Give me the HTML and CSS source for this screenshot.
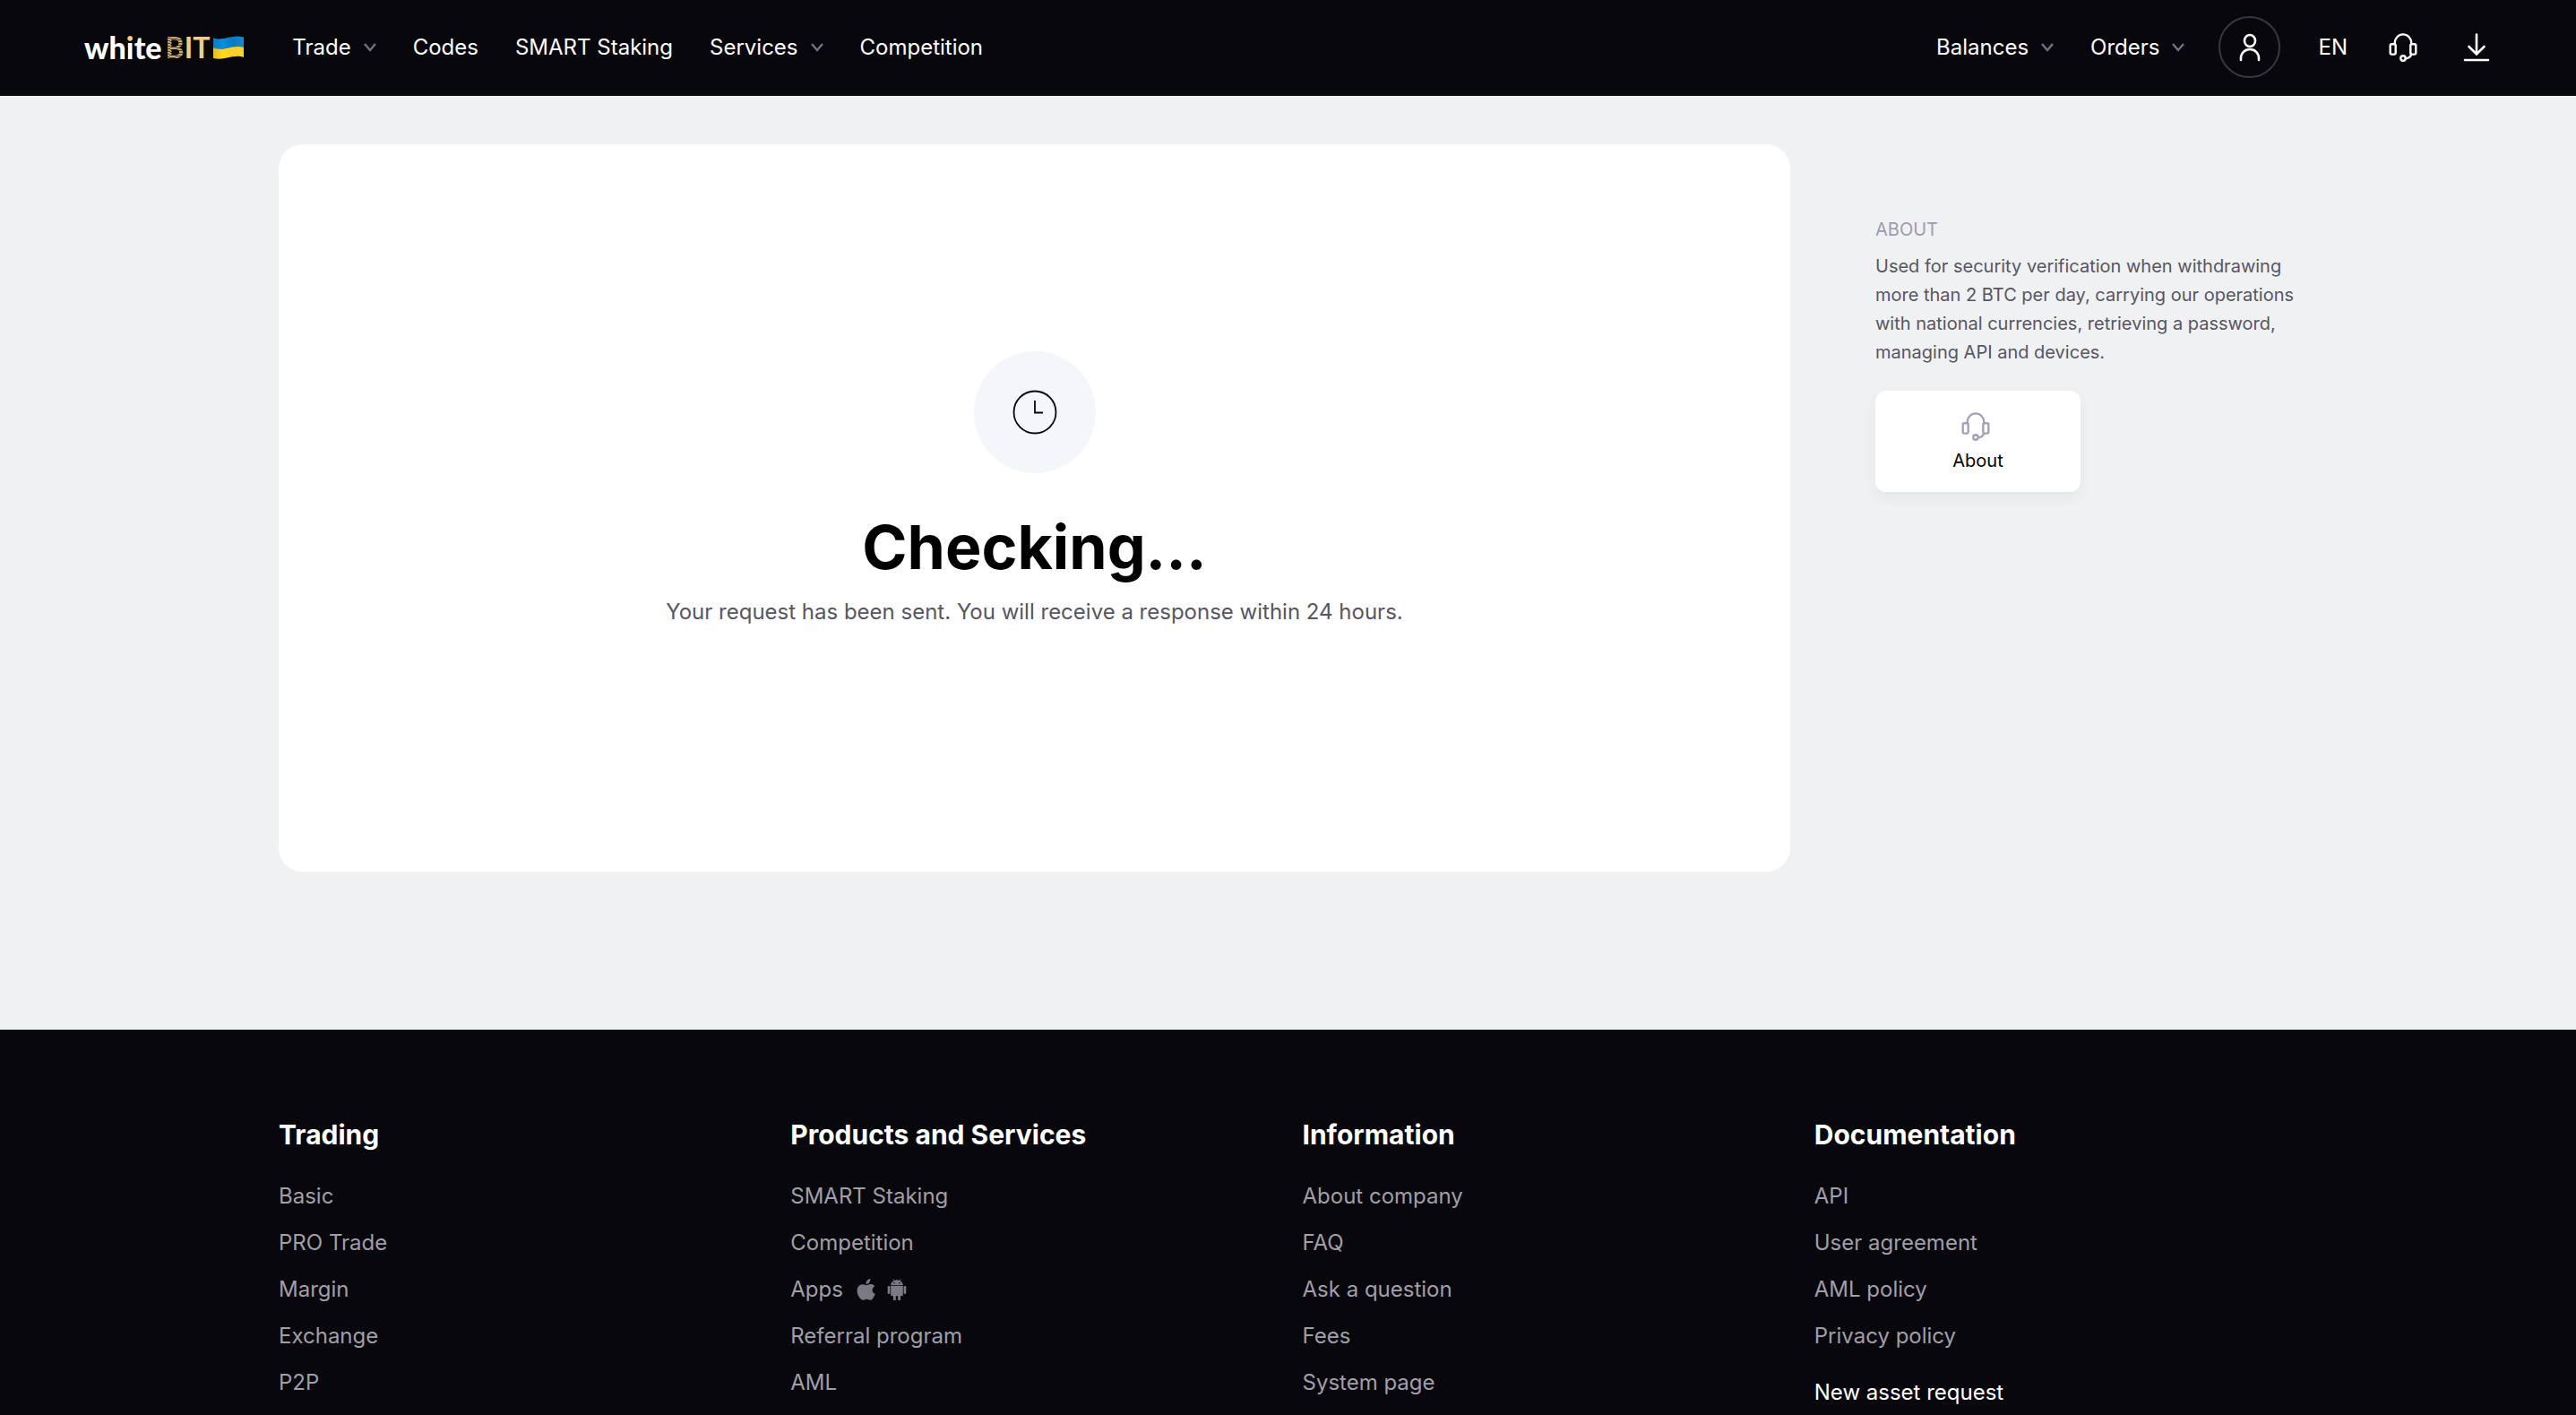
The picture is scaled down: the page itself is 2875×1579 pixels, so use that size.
FILE: index.html
```html
<!DOCTYPE html>
<html lang="en">
<head>
<meta charset="utf-8">
<meta name="viewport" content="width=device-width, initial-scale=1">
<title>Verification – whiteBIT</title>
<link rel="stylesheet" href="styles.css">
</head>
<body>
<svg class="sprite" aria-hidden="true">
  <symbol id="chevron" viewBox="0 0 14 10"><path d="M1 1l6 7 6-7" fill="none" stroke="currentColor" stroke-width="2.4"/></symbol>
  <symbol id="headset" viewBox="0 0 32 32">
    <g fill="none" stroke="currentColor" stroke-width="2.4" stroke-linejoin="round">
      <rect x="1.7" y="12.2" width="6" height="11.4" rx="1.5"/>
      <rect x="24.3" y="12.2" width="6" height="11.4" rx="1.5"/>
      <path d="M6.7 12.2V11a9.3 9.6 0 0 1 18.6 0v1.2"/>
      <path d="M25.3 23.6q-1.3 4.1-6 4.6"/>
      <circle cx="16" cy="28" r="2.7"/>
    </g>
  </symbol>
</svg>
<header class="header">
  <a class="logo" href="#" aria-label="whiteBIT">
    <span class="logo-name">wh<span class="logo-i">i</span>te</span>
    <span class="logo-bit"><span class="logo-b">B</span>IT</span>
    <svg class="flag" viewBox="0 0 34 26" aria-hidden="true">
      <defs>
        <linearGradient id="blue" x1="0" x2="1"><stop offset="0" stop-color="#1379bd"/><stop offset=".3" stop-color="#0590dc"/><stop offset=".65" stop-color="#0879c4"/><stop offset="1" stop-color="#118bd0"/></linearGradient>
        <linearGradient id="yellow" x1="0" x2="1"><stop offset="0" stop-color="#e8b92c"/><stop offset=".3" stop-color="#ffd91e"/><stop offset=".7" stop-color="#f8cf2c"/><stop offset="1" stop-color="#ffd52a"/></linearGradient>
      </defs>
      <path d="M0 2.500C12 6 20-2 34 1.500V14C22 9 14 18 0 14z" fill="url(#blue)"/>
      <path d="M0 13.500C14 18 20 9 34 13V24C22 20 14 28 0 25z" fill="url(#yellow)"/>
    </svg>
  </a>
  <nav class="nav" aria-label="Main">
    <button class="nav-item" type="button">Trade <svg class="chevron"><use href="#chevron"/></svg></button>
    <a class="nav-item" href="#">Codes</a>
    <a class="nav-item" href="#">SMART Staking</a>
    <button class="nav-item" type="button">Services <svg class="chevron"><use href="#chevron"/></svg></button>
    <a class="nav-item" href="#">Competition</a>
  </nav>
  <div class="nav account">
    <button class="nav-item" type="button">Balances <svg class="chevron"><use href="#chevron"/></svg></button>
    <button class="nav-item" type="button">Orders <svg class="chevron"><use href="#chevron"/></svg></button>
  </div>
  <div class="tools">
    <button class="profile" type="button" aria-label="Profile">
      <svg class="icon" viewBox="0 0 32 32"><g fill="none" stroke="currentColor" stroke-width="2.600" stroke-linecap="round"><ellipse cx="16" cy="8.500" rx="6" ry="6.500"/><path d="M6 30v-2a10 10 0 0 1 20 0v2"/></g></svg>
    </button>
    <button class="nav-item" type="button">EN</button>
    <button class="tool" type="button" aria-label="Support"><svg class="icon"><use href="#headset"/></svg></button>
    <button class="tool" type="button" aria-label="Download app">
      <svg class="icon" viewBox="0 0 32 32"><path d="M16 1.500V23M7.500 15l8.500 8.500 8.500-8.500M3 30h26" fill="none" stroke="currentColor" stroke-width="2.600" stroke-linecap="round"/></svg>
    </button>
  </div>
</header>

<main class="main">
  <section class="status">
    <div class="status-icon">
      <svg viewBox="0 0 50 50" aria-hidden="true"><g fill="none" stroke="#08070c" stroke-width="1.800"><circle cx="25" cy="25" r="23.500"/><path d="M25 12v13.500h9"/></g></svg>
    </div>
    <h1 class="status-title">Checking...</h1>
    <p class="status-text">Your request has been sent. You will receive a response within 24 hours.</p>
  </section>
  <aside class="about">
    <h2 class="about-title">ABOUT</h2>
    <p class="about-text">Used for security verification when withdrawing more than 2 BTC per day, carrying our operations with national currencies, retrieving a password, managing API and devices.</p>
    <a class="about-card" href="#"><svg class="icon about-icon"><use href="#headset"/></svg>About</a>
  </aside>
</main>

<footer class="footer">
  <div class="footer-grid">
    <section>
      <h3 class="footer-title">Trading</h3>
      <ul class="links">
        <li><a href="#">Basic</a></li>
        <li><a href="#">PRO Trade</a></li>
        <li><a href="#">Margin</a></li>
        <li><a href="#">Exchange</a></li>
        <li><a href="#">P2P</a></li>
      </ul>
    </section>
    <section>
      <h3 class="footer-title">Products and Services</h3>
      <ul class="links">
        <li><a href="#">SMART Staking</a></li>
        <li><a href="#">Competition</a></li>
        <li class="apps"><a href="#">Apps</a>
          <span class="stores">
          <a href="#" aria-label="App Store"><svg viewBox="0 0 24 24"><path fill="currentColor" d="M16.400 0c.2 1.700-.5 3.200-1.400 4.300-.9 1.100-2.200 1.700-3.500 1.600-.2-1.600.6-3.200 1.400-4.200C13.800.700 15.200.1 16.400 0zM21.300 8.200c-1.800 1.100-2.700 2.500-2.700 4.400 0 2.200 1.200 3.700 3.200 4.500-.8 2.200-2 4.200-3.400 5.900-1.800 1.700-3.400.4-5-.1-1.200-.3-2.200-.1-3.300.4-2.500 1.200-3.900.2-5.400-1.700C1 17.200.700 11.400 3.300 8.300c1.900-2.300 4.600-2.700 7-1.500 1.200.6 2.100.5 3.300 0 2.800-1.200 5.800-1.100 7.700 1.400z"/></svg></a>
          <a href="#" aria-label="Google Play"><svg viewBox="0 0 24 24"><g fill="currentColor"><path fill-rule="evenodd" d="M5.200 7.300C5.400 4.900 6.700 3.100 8.600 2.100L7.400.2l.5-.3 1.300 1.900a8 8 0 0 1 5.600 0L16.100-.1l.5.3-1.200 1.900c1.900 1 3.200 2.800 3.400 5.200zM9 4a.8.800 0 1 0 0 1.600A.8.800 0 0 0 9 4zm6 0a.8.800 0 1 0 0 1.600A.8.800 0 0 0 15 4z"/><path d="M5.200 8h13.600v10q0 1.300-1.300 1.300H16V23a1.300 1.300 0 0 1-2.800 0v-3.700h-2.400V23A1.300 1.300 0 0 1 8 23v-3.700H6.500q-1.300 0-1.300-1.300z"/><rect x="1.700" y="8" width="2.700" height="9" rx="1.300"/><rect x="19.600" y="8" width="2.700" height="9" rx="1.300"/></g></svg></a>
          </span>
        </li>
        <li><a href="#">Referral program</a></li>
        <li><a href="#">AML</a></li>
      </ul>
    </section>
    <section>
      <h3 class="footer-title">Information</h3>
      <ul class="links">
        <li><a href="#">About company</a></li>
        <li><a href="#">FAQ</a></li>
        <li><a href="#">Ask a question</a></li>
        <li><a href="#">Fees</a></li>
        <li><a href="#">System page</a></li>
      </ul>
    </section>
    <section>
      <h3 class="footer-title">Documentation</h3>
      <ul class="links">
        <li><a href="#">API</a></li>
        <li><a href="#">User agreement</a></li>
        <li><a href="#">AML policy</a></li>
        <li><a href="#">Privacy policy</a></li>
        <li class="featured"><a href="#">New asset request</a></li>
      </ul>
    </section>
  </div>
</footer>
</body>
</html>
```
FILE: styles.css
```css
* { box-sizing: border-box; }

body {
  margin: 0;
  background: #08070c;
  color: #000;
  font: 24px/32px Inter, "Liberation Sans", sans-serif;
  overflow-x: hidden;
}

h1, h2, h3, p, ul { margin: 0; padding: 0; }
ul { list-style: none; }
a { color: inherit; text-decoration: none; }
button { border: 0; padding: 0; background: none; color: inherit; font: inherit; cursor: pointer; }
.sprite { display: none; }
svg { display: block; flex: none; }
.icon { width: 32px; height: 32px; }

.header {
  display: flex;
  align-items: center;
  height: 107px;
  padding: 0 91px 2px 94px;
  background: #08070c;
  color: #fff;
}

.logo { display: flex; align-items: center; gap: 4px; height: 40px; font: 900 34px/40px Lato, sans-serif; }
.logo-i { background: linear-gradient(#f5cc84 15px, #fff 15px); background-clip: text; color: transparent; }
.logo-bit { color: #f5cc84; font-size: 32px; font-weight: 700; }
.logo-b { background: repeating-linear-gradient(8deg, #c9a66c 0 2px, #55462f 2px 3px); background-clip: text; color: transparent; }
.flag { width: 34px; height: 26px; }

.nav { display: flex; align-items: center; gap: 41px; margin-left: 54px; }
.nav-item { display: flex; align-items: center; gap: 14px; white-space: nowrap; }
.chevron { width: 14px; height: 10px; color: #737280; }
.account { margin-left: auto; }

.tools { display: flex; align-items: center; gap: 42px; margin-left: 38px; }
.profile {
  display: grid;
  place-items: center;
  width: 69px;
  height: 69px;
  border: 2px solid #38373f;
  border-radius: 50%;
}
.tool { display: grid; place-items: center; width: 40px; height: 40px; }

.main {
  display: grid;
  grid-template-columns: minmax(0, 1fr) 471px;
  gap: 95px;
  align-items: start;
  padding: 54px 311px 176px;
  background: #f0f1f3;
}

.status {
  display: flex;
  flex-direction: column;
  align-items: center;
  min-height: 812px;
  padding: 231px 48px 48px;
  border-radius: 27px;
  background: #fff;
  text-align: center;
}
.status-icon {
  display: grid;
  place-items: center;
  width: 136px;
  height: 136px;
  border-radius: 50%;
  background: #f5f6f9;
}
.status-icon svg { width: 50px; height: 50px; }
.status-title { margin-top: 40px; font-size: 68px; line-height: 84px; font-weight: 700; }
.status-text { margin-top: 15px; color: #575662; }

.about { padding-top: 79px; font-size: 20px; color: #575662; }
.about-title { font-size: 20px; font-weight: 400; color: #9d9cae; }
.about-text { margin-top: 9px; }
.about-card {
  display: flex;
  flex-direction: column;
  align-items: center;
  gap: 6px;
  width: 229px;
  height: 113px;
  margin-top: 27px;
  padding-top: 24px;
  border-radius: 12px;
  background: #fff;
  box-shadow: 0 6px 16px rgba(0, 0, 0, .05);
  color: #000;
}
.about-icon { margin-right: 6px; color: #a2a3b7; }

.footer { padding: 97px 311px 48px; background: #08070c; }
.footer-grid { display: grid; grid-template-columns: repeat(4, minmax(0, 1fr)); column-gap: 32px; }
.footer-title { color: #fff; font-size: 30px; line-height: 40px; font-weight: 700; }
.links { margin-top: 23px; color: #a09fa9; line-height: 52px; }
.apps { display: flex; align-items: center; gap: 14px; }
.stores { display: flex; gap: 10px; color: #7b7a84; }
.stores svg { width: 24px; height: 24px; }
.featured { margin-top: 11px; color: #fff; }
```
